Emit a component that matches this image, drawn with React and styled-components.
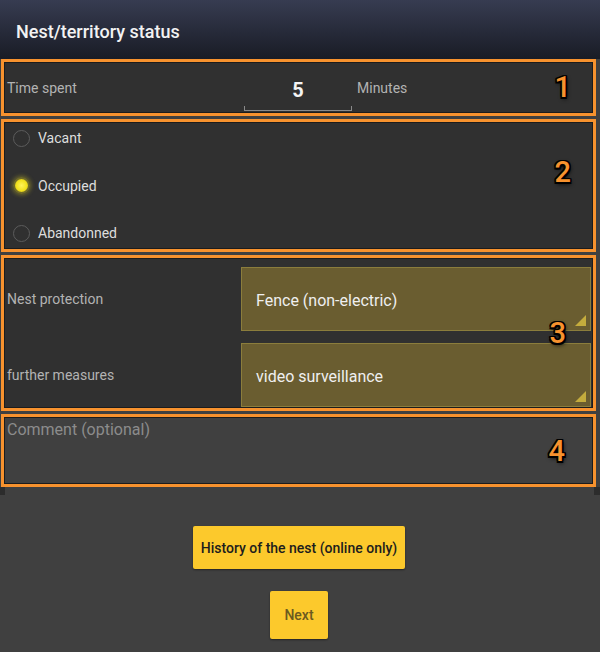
import React from 'react'
import styled, { createGlobalStyle } from 'styled-components'

function App() {
  return (
    <>
      <GlobalStyle />
      <Screen>
        <Header>
          <Title>Nest/territory status</Title>
        </Header>

        <Form>
          <Section $height={57}>
            <TimeRow>
              <Label $width={237}>Time spent</Label>
              <NumberInput>5</NumberInput>
              <Unit>Minutes</Unit>
            </TimeRow>
            <Badge $top={11} $right={22}>1</Badge>
          </Section>

          <Section $height={133}>
            <RadioGroup>
              <RadioRow>
                <Radio />
                <RadioLabel>Vacant</RadioLabel>
              </RadioRow>
              <RadioRow>
                <Radio $checked />
                <RadioLabel>Occupied</RadioLabel>
              </RadioRow>
              <RadioRow>
                <Radio />
                <RadioLabel>Abandonned</RadioLabel>
              </RadioRow>
            </RadioGroup>
            <Badge $top={36} $right={22}>2</Badge>
          </Section>

          <Section $height={156}>
            <SelectGroup>
              <SelectRow>
                <Label $width={234}>Nest protection</Label>
                <Select>
                  Fence (non-electric)
                  <Corner />
                </Select>
              </SelectRow>
              <SelectRow>
                <Label $width={234}>further measures</Label>
                <Select>
                  video surveillance
                  <Corner />
                </Select>
              </SelectRow>
            </SelectGroup>
            <Badge $top={61} $right={27}>3</Badge>
          </Section>

          <Section $height={73} $light>
            <Comment>Comment (optional)</Comment>
            <Badge $top={20} $right={28}>4</Badge>
          </Section>

          <ScrollEnd />
        </Form>

        <Actions>
          <Button $wide>History of the nest (online only)</Button>
          <Button $muted>Next</Button>
        </Actions>
      </Screen>
    </>
  )
}

export default App


// Styled Components
const GlobalStyle = createGlobalStyle`
    body {
        margin: 0;
        background: #404040;
        font-family: Roboto, "Noto Sans", "Liberation Sans", sans-serif;
    }
`

const Screen = styled.div`
    width: 600px;
    height: 652px;
    background: #404040;
    overflow: hidden;
`

const Header = styled.header`
    height: 59px;
    display: flex;
    align-items: center;
    padding: 0 16px;
    box-sizing: border-box;
    background: linear-gradient(180deg, #373c51 0%, #262a39 55%, #191c25 100%);
`

const Title = styled.h1`
    margin: 3px 0 0;
    font-size: 18px;
    font-weight: 500;
    color: #f2f2f2;
`

const Form = styled.div`
    display: flex;
    flex-direction: column;
    gap: 3px;
    padding: 0 4px 0 1px;
`

const Section = styled.section`
    position: relative;
    height: ${p => p.$height}px;
    box-sizing: border-box;
    border: 3px solid #f7922e;
    background: ${p => (p.$light ? '#404040' : '#303030')};
    box-shadow: inset 0 0 0 1px #1c1c1c;
    padding: 1px;
    display: flex;
    flex-direction: column;
`

const Badge = styled.span`
    position: absolute;
    top: ${p => p.$top}px;
    right: ${p => p.$right}px;
    font-family: Roboto, "Liberation Sans", sans-serif;
    font-size: 29px;
    font-weight: 500;
    line-height: 1;
    color: #f7922e;
    text-shadow:
        -1.5px -1.5px 0 #000, 1.5px -1.5px 0 #000,
        -1.5px 1.5px 0 #000, 1.5px 1.5px 0 #000,
        0 -1.5px 0 #000, 0 1.5px 0 #000,
        -1.5px 0 0 #000, 1.5px 0 0 #000,
        1px 2px 4px #000;
`

const Label = styled.span`
    width: ${p => p.$width}px;
    flex-shrink: 0;
    padding-left: 2px;
    font-size: 14px;
    color: #b3b3b3;
`

const TimeRow = styled.div`
    flex: 1;
    display: flex;
    align-items: center;
`

const NumberInput = styled.div`
    position: relative;
    width: 108px;
    height: 40px;
    margin-top: 6px;
    display: flex;
    align-items: center;
    justify-content: center;
    font-size: 20px;
    font-weight: 700;
    color: #f4f4f4;
    border-bottom: 1px solid #8a8a8a;
    box-sizing: border-box;

    &::before,
    &::after {
        content: '';
        position: absolute;
        bottom: 0;
        width: 1px;
        height: 4px;
        background: #8a8a8a;
    }

    &::before { left: 0; }
    &::after { right: 0; }
`

const Unit = styled.span`
    margin-left: 5px;
    font-size: 14px;
    color: #b3b3b3;
`

const RadioGroup = styled.div`
    flex: 1;
    display: flex;
    flex-direction: column;
    justify-content: space-between;
`

const RadioRow = styled.div`
    height: 30px;
    display: flex;
    align-items: center;
    padding-left: 8px;
    gap: 8px;
`

const Radio = styled.span`
    width: 17px;
    height: 17px;
    border-radius: 50%;
    box-sizing: border-box;
    border: ${p => (p.$checked ? '2px solid #6f6a2a' : '1.5px solid #5c5c5c')};
    background: ${p => (p.$checked ? 'radial-gradient(circle, #fff35a 0%, #f3e21e 55%, #b7aa1c 100%)' : 'transparent')};
    box-shadow: ${p => (p.$checked ? '0 0 4px 1px rgba(240, 225, 40, 0.35)' : 'none')};
`

const RadioLabel = styled.span`
    font-size: 14px;
    color: #dedede;
`

const SelectGroup = styled.div`
    display: flex;
    flex-direction: column;
    gap: 12px;
    padding-top: 8px;
`

const SelectRow = styled.div`
    display: flex;
    align-items: center;
`

const Select = styled.div`
    position: relative;
    flex: 1;
    height: 64px;
    margin-right: 1px;
    padding: 2px 0 0 14px;
    box-sizing: border-box;
    display: flex;
    align-items: center;
    background: #6a5d30;
    border: 1px solid #8b7d3c;
    font-size: 16px;
    color: #efefef;
`

const Corner = styled.span`
    position: absolute;
    right: 4px;
    bottom: 4px;
    width: 0;
    height: 0;
    border-left: 11px solid transparent;
    border-bottom: 11px solid #c4ac3d;
`

const Comment = styled.div`
    padding: 2px 0 0 2px;
    font-size: 16px;
    color: #8c8c8c;
`

const ScrollEnd = styled.div`
    height: 8px;
    margin: -3px -4px 0 -1px;
    border-left: 5px solid #2c2c2c;
    border-right: 6px solid #2c2c2c;
`

const Actions = styled.div`
    display: flex;
    flex-direction: column;
    align-items: center;
    gap: 22px;
    padding-top: 31px;
    padding-right: 2px;
`

const Button = styled.button`
    height: ${p => (p.$wide ? 43 : 48)}px;
    padding: 0 ${p => (p.$wide ? 8 : 14)}px;
    border: none;
    border-radius: 2px;
    background: #fcc92c;
    box-shadow: 0 1px 2px rgba(0, 0, 0, 0.45);
    font-family: Roboto, "Liberation Sans", sans-serif;
    font-size: ${p => (p.$wide ? 14 : 14)}px;
    font-weight: 500;
    color: ${p => (p.$muted ? '#6b5a20' : '#1d1d1d')};
`
